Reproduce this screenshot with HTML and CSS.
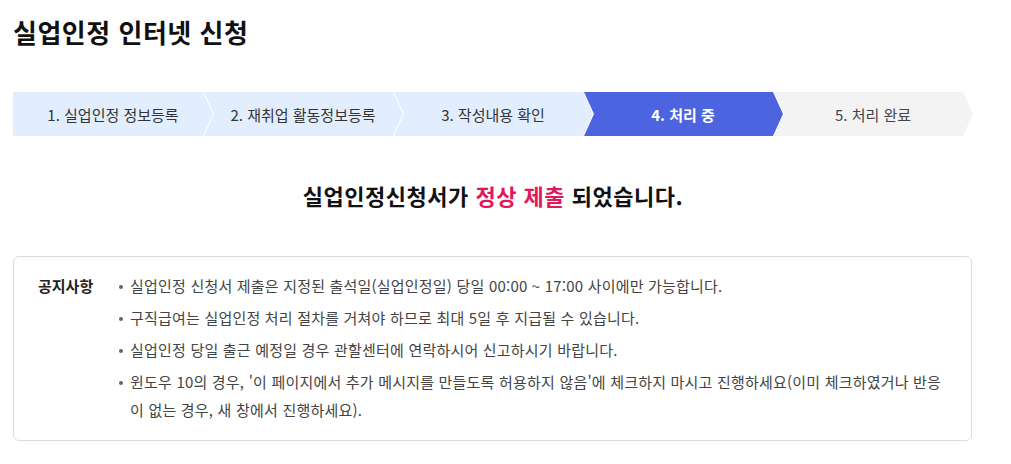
FILE: index.html
```html
<!DOCTYPE html>
<html lang="ko">
<head>
  <meta charset="UTF-8">
  <meta name="viewport" content="width=device-width, initial-scale=1">
  <title>실업인정 인터넷 신청</title>
  <link rel="stylesheet" href="styles.css">
</head>

<body>
  <div class="page">
    <h1 class="page-title">실업인정 인터넷 신청</h1>

    <ol class="steps">
      <li class="step done">1. 실업인정 정보등록</li>
      <li class="step done">2. 재취업 활동정보등록</li>
      <li class="step done">3. 작성내용 확인</li>
      <li class="step current">4. 처리 중</li>
      <li class="step todo">5. 처리 완료</li>
    </ol>

    <p class="result">실업인정신청서가 <em>정상 제출</em> 되었습니다.</p>

    <div class="notice">
      <div class="notice-label">공지사항</div>
      <ul class="notice-list">
        <li>실업인정 신청서 제출은 지정된 출석일(실업인정일) 당일 00:00 ~ 17:00 사이에만 가능합니다.</li>
        <li>구직급여는 실업인정 처리 절차를 거쳐야 하므로 최대 5일 후 지급될 수 있습니다.</li>
        <li>실업인정 당일 출근 예정일 경우 관할센터에 연락하시어 신고하시기 바랍니다.</li>
        <li>윈도우 10의 경우, '이 페이지에서 추가 메시지를 만들도록 허용하지 않음'에 체크하지 마시고 진행하세요(이미 체크하였거나 반응이 없는 경우, 새 창에서 진행하세요).</li>
      </ul>
    </div>
  </div>
</body>
</html>
```

FILE: styles.css
```css
* { margin: 0; padding: 0; box-sizing: border-box; }

body {
  font-family: "Noto Sans CJK KR", "Noto Sans", sans-serif;
  background: #fff;
  color: #222;
}

.page {
  width: 960px;
  margin-left: 13px;
  padding-top: 13px;
}

.page-title {
  font-size: 26px;
  font-weight: 700;
  line-height: 38px;
  color: #111;
  letter-spacing: 0.5px;
}

.steps {
  list-style: none;
  display: flex;
  margin-top: 41px;
  height: 44px;
}

.step {
  width: 200px;
  flex: none;
  display: flex;
  align-items: center;
  justify-content: center;
  font-size: 15px;
  color: #333;
  margin-left: -10px;
  clip-path: polygon(1px 0, calc(100% - 10px) 0, 100% 50%, calc(100% - 10px) 100%, 1px 100%, 11px 50%);
}

.step:first-child {
  margin-left: 0;
  clip-path: polygon(0 0, calc(100% - 10px) 0, 100% 50%, calc(100% - 10px) 100%, 0 100%);
}

.step.done { background: #e2eefd; }

.step.current {
  background: #4c64e0;
  color: #fff;
  font-weight: 700;
}

.step.todo {
  background: #f3f3f3;
  color: #444;
}

.result {
  margin-top: 43px;
  text-align: center;
  font-size: 22px;
  font-weight: 700;
  line-height: 32px;
  color: #111;
  letter-spacing: 0.5px;
}

.result em {
  font-style: normal;
  color: #e0175c;
}

.notice {
  display: flex;
  margin-top: 45px;
  width: 959px;
  border: 1px solid #dcdcdc;
  border-radius: 6px;
  padding: 15px 22px 16px 24px;
}

.notice-label {
  width: 80px;
  flex: none;
  font-size: 15px;
  font-weight: 700;
  line-height: 28px;
  color: #222;
}

.notice-list {
  list-style: none;
  font-size: 15px;
  line-height: 28px;
  color: #444;
  letter-spacing: 0.2px;
}

.notice-list li {
  position: relative;
  padding-left: 12px;
  margin-bottom: 4px;
}

.notice-list li:last-child { margin-bottom: 0; }

.notice-list li::before {
  content: "";
  position: absolute;
  left: 1px;
  top: 13px;
  width: 4px;
  height: 4px;
  border-radius: 50%;
  background: #666;
}
```
